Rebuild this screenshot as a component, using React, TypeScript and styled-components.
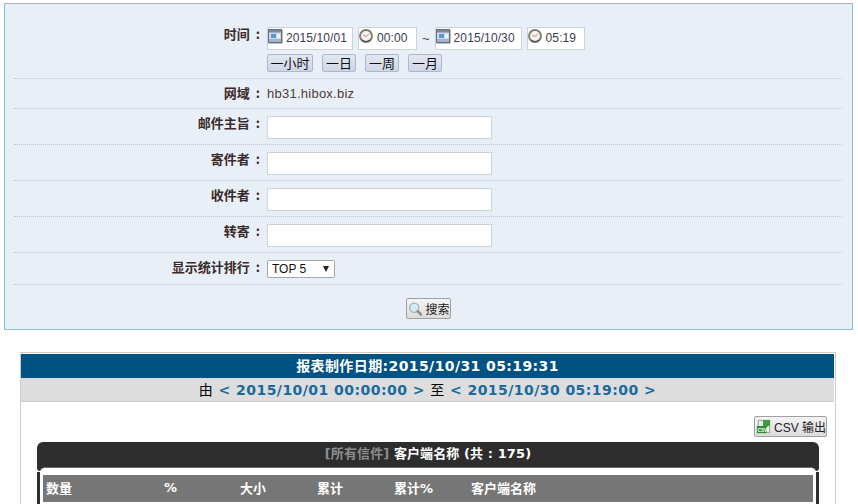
import styled, { createGlobalStyle } from "styled-components";

const Global = createGlobalStyle`
  html, body {
    margin: 0;
    padding: 0;
    background: #fff;
    overflow: hidden;
  }
  body {
    font-family: "Liberation Sans", "Noto Sans CJK SC", sans-serif;
    font-size: 12px;
    color: #333;
  }
`;

const Page = styled.div`
  width: 858px;
  height: 504px;
  overflow: hidden;
  padding: 3px 4px 0 4px;
  box-sizing: border-box;
`;

const SearchPanel = styled.div`
  width: 849px;
  height: 327px;
  box-sizing: border-box;
  background: #e9eff7;
  border: 1px solid #83c1d3;
  border-top-color: #a9b5ba;
  padding: 0 10px 0 9px;
`;

const Row = styled.div<{ $h: number }>`
  display: flex;
  height: ${(p) => p.$h}px;
  border-bottom: 1px dotted #bfc5c9;
  box-sizing: border-box;
`;

const Label = styled.div<{ $top: number }>`
  width: 247px;
  padding-top: ${(p) => p.$top}px;
  text-align: right;
  font-family: "Noto Sans CJK SC", sans-serif;
  font-size: 13px;
  line-height: 14px;
  font-weight: 700;
  color: #3a2a2a;
  white-space: nowrap;
  flex: none;
`;

const Colon = styled.span`
  margin-left: 6px;
  margin-right: 1px;
`;

const Field = styled.div<{ $top: number }>`
  padding: ${(p) => p.$top}px 0 0 6px;
`;

const Line = styled.div`
  display: flex;
  align-items: center;
`;

const DateBox = styled.div<{ $w: number }>`
  width: ${(p) => p.$w}px;
  height: 23px;
  box-sizing: border-box;
  border: 1px solid #ccd2d6;
  background: #fff;
  display: flex;
  align-items: center;
  padding: 0 0 2px 18px;
  position: relative;
  margin-right: 5px;
  font-size: 12px;
  letter-spacing: 0.1px;
  color: #3c3c50;
`;

const BoxIcon = styled.svg`
  position: absolute;
  left: -1px;
  top: 0;
`;

const Tilde = styled.span`
  margin: 0 5px 0 0;
  font-size: 13px;
  color: #444;
`;

const QuickRow = styled.div`
  display: flex;
  gap: 9px;
  margin-top: 4px;
`;

const Quick = styled.button<{ $w: number }>`
  width: ${(p) => p.$w}px;
  height: 18px;
  padding: 0;
  box-sizing: border-box;
  border: 1px solid #aeb8cb;
  border-radius: 2px;
  background: linear-gradient(#e3e7f1, #cfd6e8);
  font-family: "Noto Sans CJK SC", sans-serif;
  font-size: 13px;
  line-height: 14px;
  color: #111;
`;

const Plain = styled.div`
  font-size: 13px;
  color: #4a3c3c;
  letter-spacing: 0.25px;
`;

const TextBox = styled.div`
  width: 225px;
  height: 23px;
  box-sizing: border-box;
  background: #fff;
  border: 1px solid #ccd4d8;
`;

const SelectBox = styled.div`
  width: 68px;
  height: 18px;
  box-sizing: border-box;
  background: #fff;
  border: 1px solid #a5a5a5;
  border-radius: 2px;
  padding: 0 0 0 4px;
  display: flex;
  align-items: center;
  justify-content: space-between;
  font-size: 12px;
  color: #111;
`;

const Caret = styled.span`
  width: 0;
  height: 0;
  border-left: 3.5px solid transparent;
  border-right: 3.5px solid transparent;
  border-top: 6px solid #222;
  margin-right: 5px;
`;

const SearchRow = styled.div`
  display: flex;
  justify-content: center;
  padding: 13px 0 0 0;
`;

const IconButton = styled.button<{ $w: number }>`
  width: ${(p) => p.$w}px;
  height: 21px;
  box-sizing: border-box;
  padding: 0 0 0 1px;
  display: flex;
  align-items: center;
  gap: 3px;
  border: 1px solid #a0a0a0;
  border-radius: 2px;
  background: linear-gradient(#f4f4f4, #dcdcdc);
  font-family: "Liberation Sans", "Noto Sans CJK SC", sans-serif;
  font-size: 12px;
  color: #222;
  white-space: nowrap;
`;

const Report = styled.div`
  width: 816px;
  margin: 22px 0 0 16px;
  border: 1px solid #ccc;
  border-bottom: none;
  height: 152px;
  box-sizing: border-box;
  padding: 1px 1px 0 0;
`;

const ReportTitle = styled.div`
  height: 24px;
  background: #005282;
  color: #fff;
  text-align: center;
  font-family: "DejaVu Sans", "Noto Sans CJK SC", sans-serif;
  font-weight: 700;
  font-size: 14px;
  letter-spacing: 0.4px;
  line-height: 24px;
`;

const ReportRange = styled.div`
  height: 24px;
  box-sizing: border-box;
  background: #ddd;
  border-bottom: 1px solid #ccc;
  text-align: center;
  font-family: "DejaVu Sans", "Noto Sans CJK SC", sans-serif;
  font-weight: 700;
  font-size: 14px;
  letter-spacing: 0.45px;
  line-height: 23px;
  color: #1a6a9c;
`;

const RangeWord = styled.span`
  font-family: "Noto Sans CJK SC", sans-serif;
  font-weight: 400;
  color: #000;
`;

const Tools = styled.div`
  display: flex;
  justify-content: flex-end;
  padding: 14px 7px 5px 0;
`;

const Card = styled.div`
  margin: 0 15px 0 16px;
`;

const CardTop = styled.div`
  height: 29px;
  background: #2d2d2d;
  border-radius: 6px 6px 3px 3px;
  text-align: center;
  line-height: 24px;
  font-family: "DejaVu Sans", "Noto Sans CJK SC", sans-serif;
  font-weight: 700;
  font-size: 13px;
  letter-spacing: 0.1px;
  color: #fff;
`;

const Scope = styled.span`
  color: #8d8d8d;
`;

const CardSides = styled.div`
  margin-top: -4px;
  padding: 0 3px;
  height: 37px;
  position: relative;
  background: linear-gradient(transparent 5px, #2d2d2d 5px);
`;

const CardBody = styled.div`
  background: #fff;
  border-top: 1px solid #666;
  border-radius: 5px 5px 0 0;
  padding: 7px 3px 0 3px;
  height: 100%;
  box-sizing: border-box;
`;

const HeadRow = styled.div`
  height: 27px;
  background: #767676;
  display: flex;
  align-items: center;
  padding: 0 0 2px 3px;
  box-sizing: border-box;
  color: #fff;
  font-family: "DejaVu Sans", "Noto Sans CJK SC", sans-serif;
  font-weight: 700;
  font-size: 13px;
`;

const HeadCell = styled.div<{ $w: number }>`
  width: ${(p) => p.$w}px;
  flex: none;
`;

const CalendarIcon = () => (
  <BoxIcon width="16" height="16" viewBox="0 0 16 16">
    <rect x="1.5" y="1.5" width="13" height="13" fill="#d3d9e6" stroke="#666f80" />
    <rect x="2" y="2" width="12" height="2.5" fill="#7b869b" />
    <rect x="4" y="6" width="5" height="4" fill="#4f9bd2" />
    <rect x="10" y="6" width="3" height="4" fill="#eef1f6" />
    <rect x="2" y="11" width="12" height="3" fill="#a9b2c6" />
    <path d="M15.5 2 V15.5 H2" fill="none" stroke="#b9bec8" />
  </BoxIcon>
);

const ClockIcon = () => (
  <BoxIcon width="16" height="16" viewBox="0 0 16 16">
    <circle cx="8" cy="8" r="6" fill="#f4f4ef" stroke="#7c7c74" strokeWidth="1.9" />
    <path d="M5 7 L8 8.5 L11 6" fill="none" stroke="#c98a80" strokeWidth="1" />
    <path d="M4 12 A6 6 0 0 0 12 12" fill="none" stroke="#55554f" strokeWidth="1.4" />
  </BoxIcon>
);

const SearchIcon = () => (
  <svg width="18" height="18" viewBox="0 0 18 18">
    <circle cx="7.5" cy="7.5" r="5.5" fill="#d4e9f7" stroke="#a5b2b9" strokeWidth="1.6" />
    <path d="M11.5 11.5 L16 16" stroke="#8d8d80" strokeWidth="2.8" strokeLinecap="round" />
  </svg>
);

const CsvIcon = () => (
  <svg width="17" height="17" viewBox="0 0 17 17">
    <path d="M2.5 1.5 H15.5 V15.5 H2.5 Z" fill="#e8eee6" stroke="#8aa088" />
    <path d="M8 1 H16 V7 L12 9 H8 Z" fill="#3f9a3f" />
    <rect x="1" y="8" width="11" height="8" fill="#2f8a34" />
    <text x="1.6" y="14.6" fontFamily="Liberation Sans" fontSize="5.5" fontWeight="700" fill="#fff">CSV</text>
  </svg>
);

export default function App(): JSX.Element {
  return (
    <Page>
      <Global />
      <SearchPanel>
        <Row $h={75}>
          <Label $top={23}>时间<Colon>:</Colon></Label>
          <Field $top={23}>
            <Line>
              <DateBox $w={86}><CalendarIcon />2015/10/01</DateBox>
              <DateBox $w={59}><ClockIcon />00:00</DateBox>
              <Tilde>~</Tilde>
              <DateBox $w={87}><CalendarIcon />2015/10/30</DateBox>
              <DateBox $w={58}><ClockIcon />05:19</DateBox>
            </Line>
            <QuickRow>
              <Quick $w={46}>一小时</Quick>
              <Quick $w={34}>一日</Quick>
              <Quick $w={34}>一周</Quick>
              <Quick $w={34}>一月</Quick>
            </QuickRow>
          </Field>
        </Row>
        <Row $h={30}>
          <Label $top={7}>网域<Colon>:</Colon></Label>
          <Field $top={7}><Plain>hb31.hibox.biz</Plain></Field>
        </Row>
        <Row $h={36}>
          <Label $top={7}>邮件主旨<Colon>:</Colon></Label>
          <Field $top={7}><TextBox /></Field>
        </Row>
        <Row $h={36}>
          <Label $top={7}>寄件者<Colon>:</Colon></Label>
          <Field $top={7}><TextBox /></Field>
        </Row>
        <Row $h={36}>
          <Label $top={7}>收件者<Colon>:</Colon></Label>
          <Field $top={7}><TextBox /></Field>
        </Row>
        <Row $h={36}>
          <Label $top={7}>转寄<Colon>:</Colon></Label>
          <Field $top={7}><TextBox /></Field>
        </Row>
        <Row $h={32}>
          <Label $top={7}>显示统计排行<Colon>:</Colon></Label>
          <Field $top={7}>
            <SelectBox>TOP 5<Caret /></SelectBox>
          </Field>
        </Row>
        <SearchRow>
          <IconButton $w={45}><SearchIcon />搜索</IconButton>
        </SearchRow>
      </SearchPanel>
      <Report>
        <ReportTitle>报表制作日期:2015/10/31 05:19:31</ReportTitle>
        <ReportRange>
          <RangeWord>由</RangeWord> &lt; 2015/10/01 00:00:00 &gt; <RangeWord>至</RangeWord> &lt; 2015/10/30 05:19:00 &gt;
        </ReportRange>
        <Tools>
          <IconButton $w={73}><CsvIcon />CSV 输出</IconButton>
        </Tools>
        <Card>
          <CardTop><Scope>[所有信件]</Scope> 客户端名称 (共 : 175)</CardTop>
          <CardSides>
            <CardBody>
              <HeadRow>
                <HeadCell $w={118}>数量</HeadCell>
                <HeadCell $w={76}>%</HeadCell>
                <HeadCell $w={77}>大小</HeadCell>
                <HeadCell $w={77}>累计</HeadCell>
                <HeadCell $w={77}>累计%</HeadCell>
                <HeadCell $w={200}>客户端名称</HeadCell>
              </HeadRow>
            </CardBody>
          </CardSides>
        </Card>
      </Report>
    </Page>
  );
}
